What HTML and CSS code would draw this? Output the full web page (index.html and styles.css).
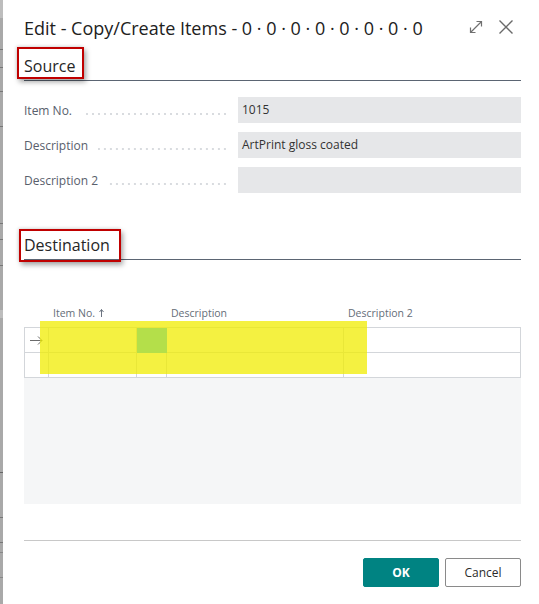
FILE: index.html
```html
<!DOCTYPE html>
<html lang="en">
<head>
<meta charset="utf-8">
<title>Edit - Copy/Create Items</title>
<link rel="stylesheet" href="styles.css">
</head>
<body>
<div class="screen">
  <div class="backdrop"></div>
  <div class="dialog">
    <header class="dlg-head">
      <h1 class="dlg-title">Edit - Copy/Create Items - 0 · 0 · 0 · 0 · 0 · 0 · 0 · 0</h1>
      <div class="dlg-actions">
        <button class="icon-btn" aria-label="Expand">
          <svg width="14" height="14" viewBox="0 0 14 14"><path d="M1.5 12.5 L12.5 1.5 M7.5 1.5 H12.5 V6.5 M1.5 7.5 V12.5 H6.5" fill="none" stroke="#707070" stroke-width="1.2"/></svg>
        </button>
        <button class="icon-btn" aria-label="Close">
          <svg width="14" height="14" viewBox="0 0 14 14"><path d="M0.5 0.5 L13.5 13.5 M13.5 0.5 L0.5 13.5" fill="none" stroke="#6a6a6a" stroke-width="1.4"/></svg>
        </button>
      </div>
    </header>

    <section class="group">
      <h2 class="group-title"><span class="annot annot-source">Source</span></h2>
      <div class="fields">
        <div class="field">
          <div class="field-label"><span>Item No.</span><span class="leader"></span></div>
          <div class="field-value">1015</div>
        </div>
        <div class="field">
          <div class="field-label"><span>Description</span><span class="leader"></span></div>
          <div class="field-value">ArtPrint gloss coated</div>
        </div>
        <div class="field">
          <div class="field-label"><span>Description 2</span><span class="leader"></span></div>
          <div class="field-value"></div>
        </div>
      </div>
    </section>

    <section class="group group-dest">
      <h2 class="group-title"><span class="annot annot-dest">Destination</span></h2>
      <div class="grid-head">
        <div class="gh-cell"></div>
        <div class="gh-cell">Item No. <svg class="sort-ico" width="5" height="8" viewBox="0 0 5 8"><path d="M2.5 0.5 V8 M0.5 3 L2.5 0.5 L4.5 3" fill="none" stroke="#6b7380" stroke-width="1"/></svg></div>
        <div class="gh-cell"></div>
        <div class="gh-cell">Description</div>
        <div class="gh-cell">Description 2</div>
      </div>
      <div class="grid-area">
        <div class="grid-body">
          <div class="g-row">
            <div class="g-cell g-ind"><svg width="13" height="9" viewBox="0 0 13 9"><path d="M0 4.5 H12 M8 0.5 L12 4.5 L8 8.5" fill="none" stroke="#6b6b6b" stroke-width="1"/></svg></div>
            <div class="g-cell"></div>
            <div class="g-cell"></div>
            <div class="g-cell"></div>
            <div class="g-cell"></div>
          </div>
          <div class="g-row">
            <div class="g-cell g-ind"></div>
            <div class="g-cell"></div>
            <div class="g-cell"></div>
            <div class="g-cell"></div>
            <div class="g-cell"></div>
          </div>
          <div class="highlight"><div class="highlight-cell"></div></div>
        </div>
        <div class="grid-empty"></div>
      </div>
    </section>

    <footer class="dlg-foot">
      <button class="btn btn-primary">OK</button>
      <button class="btn btn-secondary">Cancel</button>
    </footer>
  </div>
</div>
</body>
</html>
```

FILE: styles.css
```css
* { box-sizing: border-box; }

html, body {
  margin: 0;
  padding: 0;
  background: #ffffff;
}

body {
  width: 539px;
  height: 604px;
  overflow: hidden;
  font-family: "Open Sans", "Noto Sans", sans-serif;
  color: #212121;
}

.screen {
  display: flex;
  height: 604px;
}

.backdrop {
  flex: none;
  width: 3px;
  background:
    linear-gradient(to bottom,
      #bdbdbd 0, #bdbdbd 18px,
      #a9a9a9 18px, #a9a9a9 49px, #777 49px, #777 50px,
      #a9a9a9 50px, #a9a9a9 67px, #777 67px, #777 68px,
      #a9a9a9 68px, #a9a9a9 91px, #777 91px, #777 92px,
      #a9a9a9 92px, #a9a9a9 126px, #777 126px, #777 127px,
      #a9a9a9 127px, #a9a9a9 223px, #777 223px, #777 224px,
      #a9a9a9 224px, #a9a9a9 239px, #777 239px, #777 240px,
      #a9a9a9 240px, #a9a9a9 265px, #777 265px, #777 266px,
      #a9a9a9 266px, #a9a9a9 310px, #bdbdbd 310px, #bdbdbd 318px,
      #a9a9a9 318px, #a9a9a9 472px, #666 472px, #666 473px,
      #a9a9a9 473px, #a9a9a9 517px, #777 517px, #777 518px,
      #a9a9a9 518px, #a9a9a9 542px, #777 542px, #777 543px,
      #a9a9a9 543px, #a9a9a9 552px, #888 552px, #888 553px,
      #a9a9a9 553px, #a9a9a9 577px, #888 577px, #888 578px,
      #a9a9a9 578px);
}

.dialog {
  flex: 1;
  display: flex;
  flex-direction: column;
  padding: 0 18px 0 21px;
  background: #ffffff;
}

/* header */
.dlg-head {
  display: flex;
  align-items: flex-start;
  height: 55px;
  padding-top: 16px;
}

.dlg-title {
  margin: 0;
  font-size: 18px;
  line-height: 24px;
  font-weight: 400;
  color: #212121;
  white-space: nowrap;
}

.dlg-actions {
  margin-left: auto;
  display: flex;
  gap: 16px;
  padding-top: 4px;
  padding-right: 8px;
}

.icon-btn {
  display: block;
  width: 14px;
  height: 14px;
  padding: 0;
  border: 0;
  background: none;
}

.icon-btn svg { display: block; }

/* section headings */
.group-title {
  margin: 0;
  font-size: 16px;
  line-height: 22px;
  font-weight: 400;
  color: #262626;
  padding-bottom: 3px;
  border-bottom: 1px solid #5b6573;
}

.annot {
  position: relative;
  display: inline-block;
}

.annot::after {
  content: "";
  position: absolute;
  border: 2px solid #c00000;
  box-shadow: 2px 3px 5px rgba(0, 0, 0, 0.35), -1px -1px 3px rgba(0, 0, 0, 0.12);
}

.annot-source::after {
  top: -8px;
  bottom: -2px;
  left: -7px;
  right: -9px;
}

.annot-dest::after {
  top: -5px;
  bottom: -6px;
  left: -5px;
  right: -11px;
}

/* fields */
.fields {
  display: flex;
  flex-direction: column;
  gap: 9px;
  margin-top: 16px;
}

.field {
  display: flex;
  height: 26px;
}

.field-label {
  flex: none;
  width: 214px;
  display: flex;
  align-items: center;
  padding-right: 10px;
  font-size: 12px;
  color: #58606c;
}

.leader {
  flex: 1;
  align-self: stretch;
  margin-left: 10px;
  background-image: radial-gradient(circle, #c4c8ce 0.6px, transparent 0.9px);
  background-size: 6px 2px;
  background-repeat: repeat-x;
  background-position: right 16px;
}

.field-value {
  flex: 1;
  background: #e6e7e9;
  font-size: 12px;
  line-height: 26px;
  padding-left: 4px;
  color: #333333;
}

/* destination */
.group-dest {
  margin-top: 41px;
}

.grid-head {
  display: grid;
  grid-template-columns: 24px 88px 30px 177px 1fr;
  margin-top: 45px;
  padding-left: 1px;
  padding-bottom: 6px;
  font-size: 10.5px;
  line-height: 16px;
  color: #656d78;
}

.gh-cell {
  padding-left: 4px;
  white-space: nowrap;
}

.sort-ico {
  vertical-align: 0px;
  margin-left: 1px;
}

.grid-body {
  position: relative;
  border-top: 1px solid #d3d6da;
  border-left: 1px solid #d3d6da;
}

.g-row {
  display: grid;
  grid-template-columns: 24px 88px 30px 177px 1fr;
  height: 25px;
}

.g-cell {
  border-right: 1px solid #d3d6da;
  border-bottom: 1px solid #d3d6da;
}

.g-ind {
  display: flex;
  align-items: center;
  padding-left: 5px;
}

.g-ind svg { display: block; }

.highlight {
  position: absolute;
  left: 15px;
  top: -7px;
  width: 327px;
  height: 53px;
  background: rgba(240, 236, 0, 0.745);
}

.highlight-cell {
  position: absolute;
  left: 97px;
  top: 7px;
  width: 30px;
  height: 25px;
  background: #b4df4a;
}

.grid-empty {
  height: 126px;
  background: #f5f6f7;
}

/* footer */
.dlg-foot {
  margin-top: 36px;
  border-top: 1px solid #c8c8c8;
  padding-top: 17px;
  display: flex;
  justify-content: flex-end;
  gap: 6px;
}

.btn {
  width: 76px;
  height: 29px;
  border-radius: 2px;
  font-family: "Open Sans", "Noto Sans", sans-serif;
  font-size: 12px;
  padding: 0;
}

.btn-primary {
  background: #008382;
  border: 1px solid #008382;
  color: #ffffff;
  font-weight: 700;
}

.btn-secondary {
  background: #ffffff;
  border: 1px solid #8a8a8a;
  color: #2b2b2b;
}
```
